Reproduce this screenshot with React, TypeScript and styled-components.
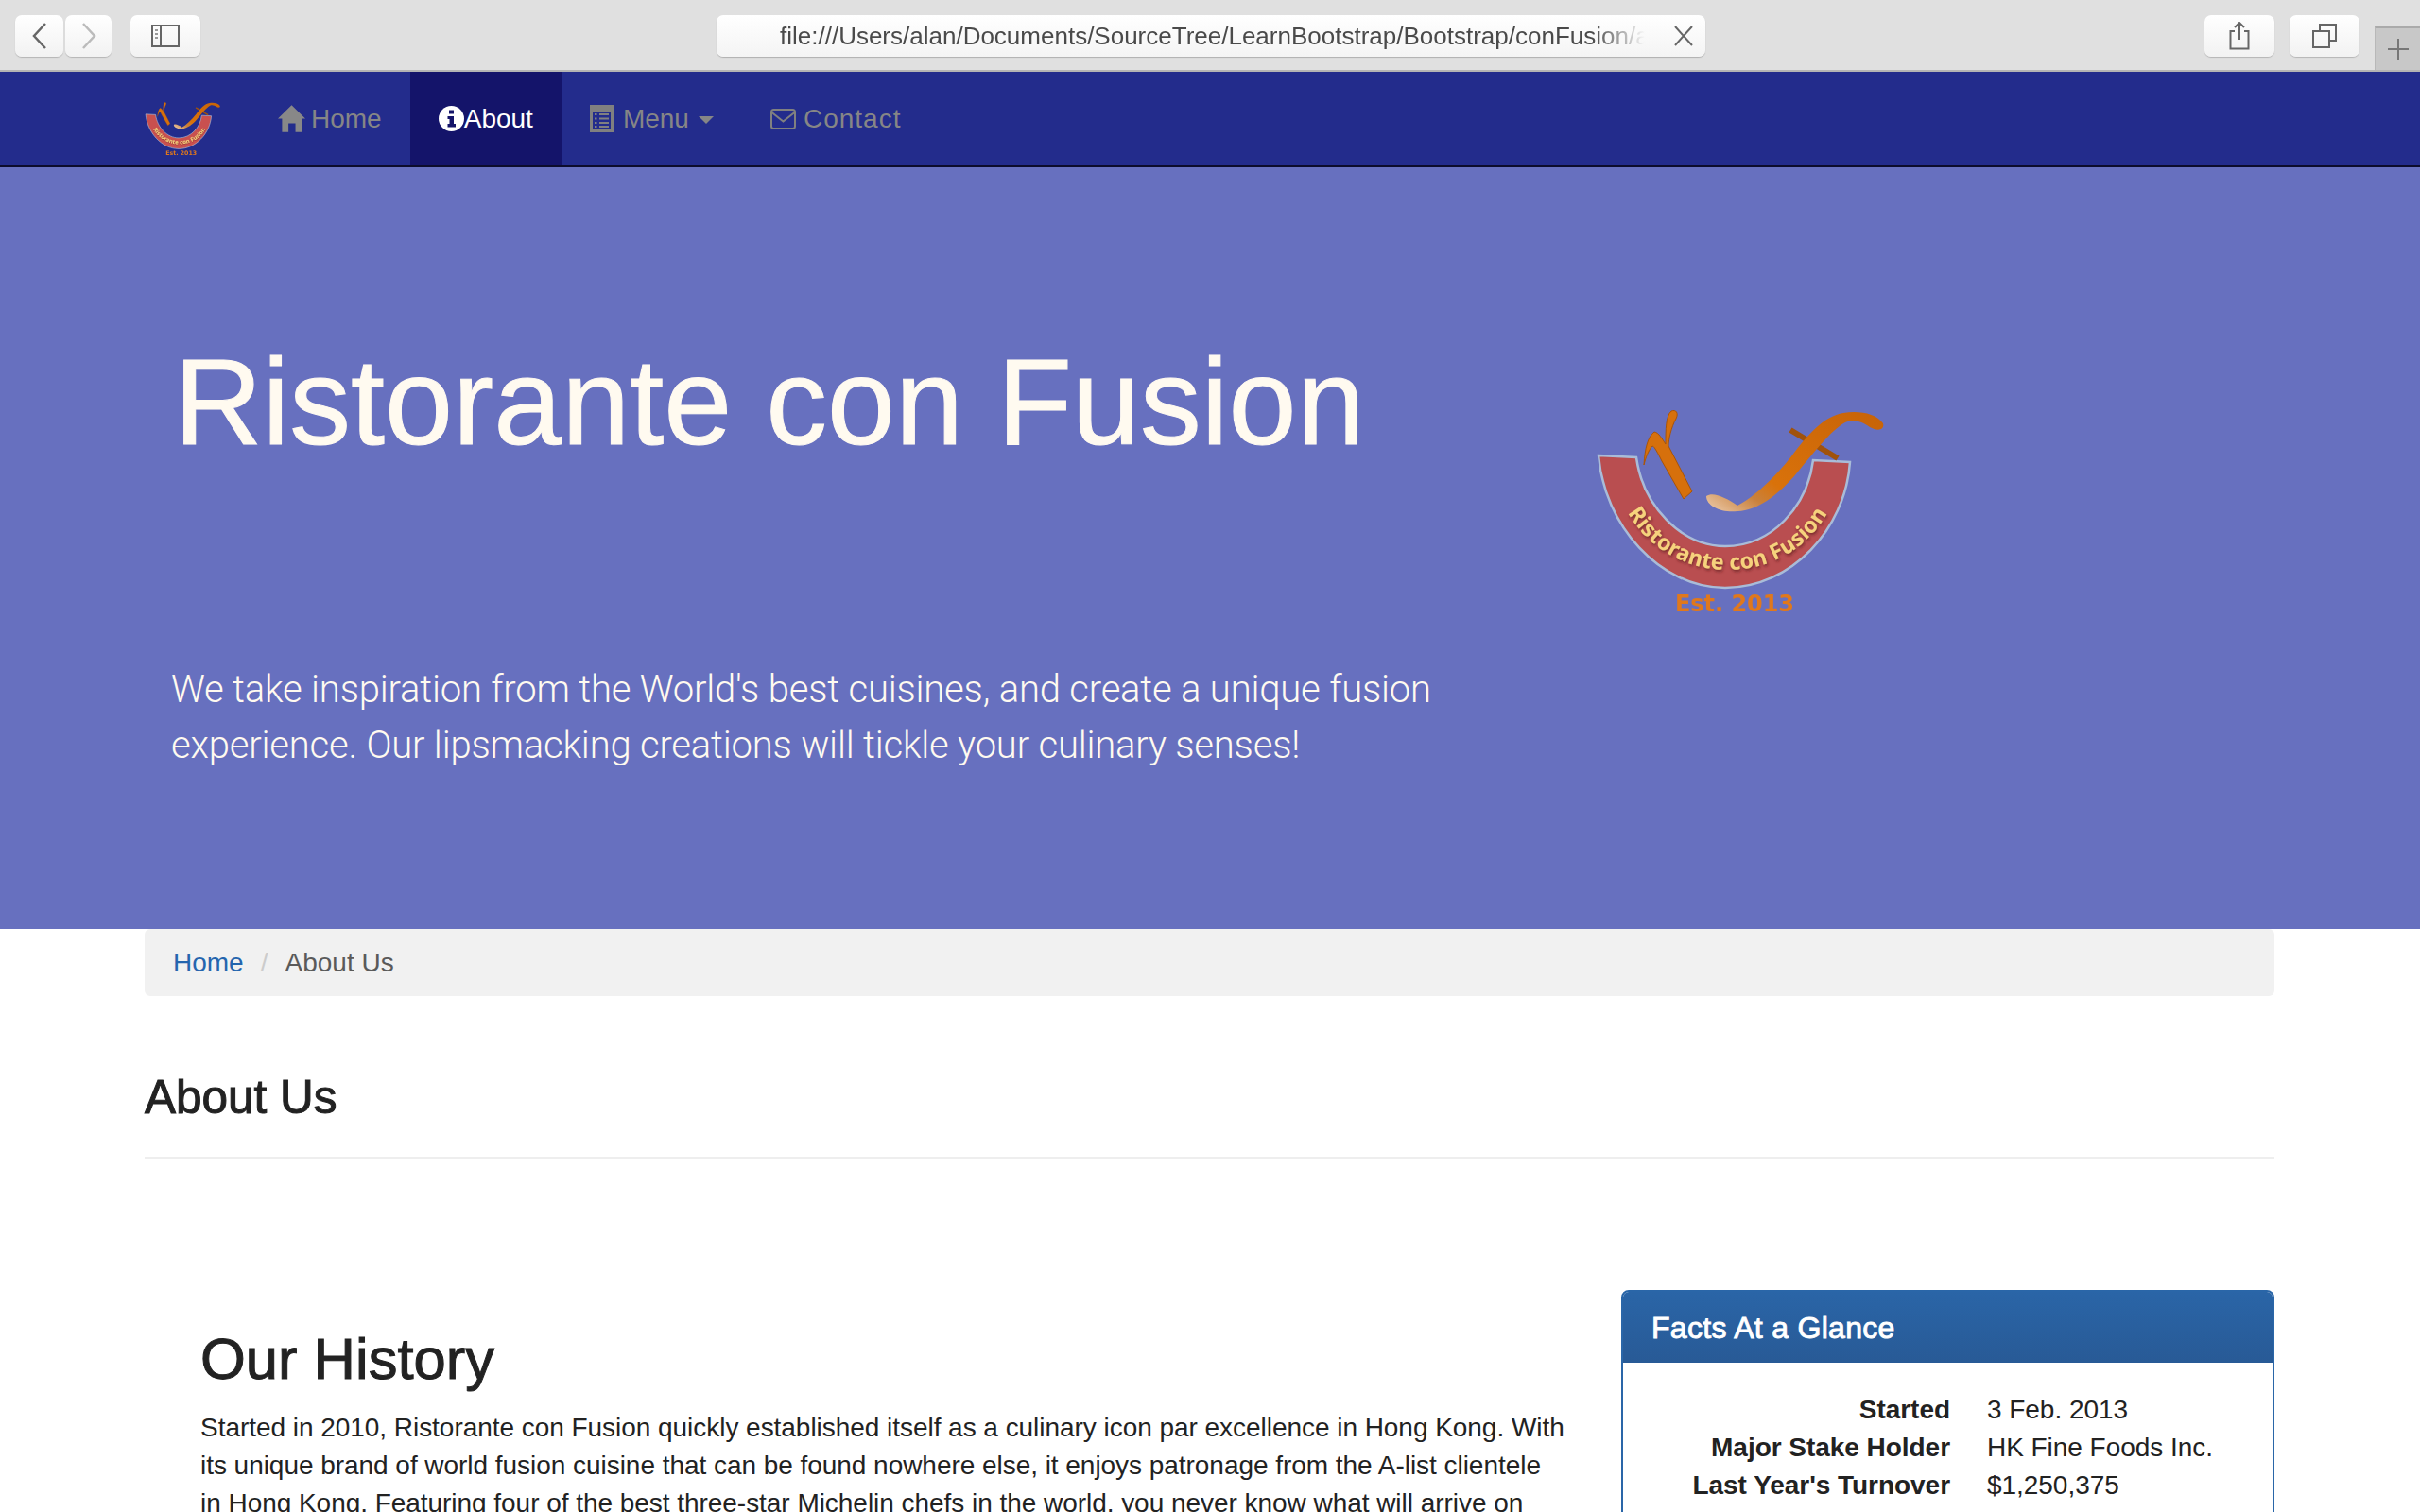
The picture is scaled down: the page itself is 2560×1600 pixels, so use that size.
import styled, { createGlobalStyle } from "styled-components";

const GlobalStyle = createGlobalStyle`
  html, body {
    margin: 0;
    padding: 0;
    background: #fff;
  }
  body {
    font-family: "Liberation Sans", Arial, sans-serif;
    font-size: 28px;
    line-height: 40px;
    letter-spacing: -0.04px;
    color: #222;
  }
  * {
    box-sizing: border-box;
  }
`;

function Logo({ small }: { small?: boolean }) {
  const key = small ? "S" : "L";
  return (
    <LogoSvg $small={small} viewBox="0 0 360 260">
      <defs>
        <linearGradient id={`spoon${key}`} x1="0" y1="0.9" x2="1" y2="0.1">
          <stop offset="0" stopColor="#e6bd96" />
          <stop offset="0.18" stopColor="#c9813c" />
          <stop offset="0.32" stopColor="#d9720a" />
          <stop offset="1" stopColor="#c86408" />
        </linearGradient>
        <path id={`arc${key}`} d="M62 133 C84 170 122 193 168 193 C214 193 252 170 273 133" />
        <filter id={`shadow${key}`} x="-10%" y="-20%" width="120%" height="140%">
          <feDropShadow dx="1" dy="2" stdDeviation="1.5" floodColor="#5a1c1c" floodOpacity="0.7" />
        </filter>
      </defs>
      <path
        d="M31 72 L71 74 C78 125 118 168 165 168 C215 168 252 125 258 77 L297 79 C292 150 235 212 165 212 C95 212 37 145 31 72 Z"
        fill={small ? "#c9504f" : "#b94e50"}
        stroke="#a9bcd8"
        strokeWidth="2.5"
      />
      <path
        d="M79 82 C80 65 83 52 90 47 C95 48 98 54 102 60 C102 45 102 30 108 25 C113 23 116 27 113 33 C108 42 105 55 105 62 L130 110 L121 118 L98 78 C94 70 90 62 88 62 C84 66 81 74 79 82 Z"
        fill="#d6700c"
        stroke="#a85408"
        strokeWidth="1"
      />
      <path d="M234 45 L284 75" stroke="#a0520c" strokeWidth="6" fill="none" />
      <path
        d="M145 115 C152 110 165 116 178 125 C195 116 215 98 235 73 C252 50 270 30 290 27 C305 24 325 27 332 38 C334 46 325 46 318 42 C310 36 300 33 292 37 C276 46 258 70 238 94 C220 114 200 130 178 131 C162 133 145 126 145 115 Z"
        fill={`url(#spoon${key})`}
      />
      <text fontFamily="'Noto Sans', sans-serif" fontSize="23" fontWeight="700" letterSpacing="0.3" fill="#f6d27c" filter={`url(#shadow${key})`}>
        <textPath href={`#arc${key}`} startOffset="50%" textAnchor="middle">
          Ristorante con Fusion
        </textPath>
      </text>
      <text x="175" y="237" textAnchor="middle" fontFamily="'DejaVu Sans', sans-serif" fontSize="24" fontWeight="700" fill="#e0781c">
        Est. 2013
      </text>
    </LogoSvg>
  );
}

function App() {
  return (
    <>
      <GlobalStyle />
      <Page>
        <Toolbar>
          <NavPair>
            <ToolButton $width={51}>
              <svg width="16" height="30" viewBox="0 0 16 30">
                <path d="M14 2 L2 15 L14 28" fill="none" stroke="#666" strokeWidth="2.5" />
              </svg>
            </ToolButton>
            <ToolButton $width={49}>
              <svg width="16" height="30" viewBox="0 0 16 30">
                <path d="M2 2 L14 15 L2 28" fill="none" stroke="#bbb" strokeWidth="2.5" />
              </svg>
            </ToolButton>
          </NavPair>
          <ToolButton $width={74}>
            <svg width="30" height="24" viewBox="0 0 30 24">
              <rect x="1" y="1" width="28" height="22" fill="none" stroke="#666" strokeWidth="2" />
              <path d="M10 1 V23" stroke="#666" strokeWidth="2" />
              <path d="M4 6 H7 M4 10 H7 M4 14 H7" stroke="#999" strokeWidth="2" />
            </svg>
          </ToolButton>
          <AddressBar>
            <AddressText>file:///Users/alan/Documents/SourceTree/LearnBootstrap/Bootstrap/conFusion/about.html</AddressText>
            <svg width="22" height="22" viewBox="0 0 22 22">
              <path d="M2 1 L20 21 M20 1 L2 21" stroke="#666" strokeWidth="2" />
            </svg>
          </AddressBar>
          <RightTools>
            <ToolButton $width={74}>
              <svg width="22" height="30" viewBox="0 0 22 30">
                <path d="M6 10 H1.5 V28.5 H20.5 V10 H16" fill="none" stroke="#666" strokeWidth="2" />
                <path d="M11 1 V19 M6 6 L11 1 L16 6" fill="none" stroke="#666" strokeWidth="2" />
              </svg>
            </ToolButton>
            <ToolButton $width={74}>
              <svg width="26" height="26" viewBox="0 0 26 26">
                <rect x="1" y="8" width="17" height="17" fill="none" stroke="#666" strokeWidth="2" />
                <path d="M8 8 V1 H25 V18 H18" fill="none" stroke="#666" strokeWidth="2" />
              </svg>
            </ToolButton>
          </RightTools>
          <NewTab>
            <svg width="24" height="24" viewBox="0 0 24 24">
              <path d="M12 1 V23 M1 12 H23" stroke="#777" strokeWidth="2" />
            </svg>
          </NewTab>
        </Toolbar>

        <Navbar>
          <Brand>
            <Logo small />
          </Brand>
          <NavItem $gap={6}>
            <svg width="29" height="29" viewBox="0 0 86 84">
              <path d="M43 0 L86 42 L75 42 L75 84 L55 84 L55 57 L33 57 L33 84 L13 84 L13 42 L0 42 Z" fill="#888" />
            </svg>
            Home
          </NavItem>
          <NavItem $active $gap={0}>
            <svg width="27" height="27" viewBox="0 0 27 27">
              <circle cx="13.5" cy="13.5" r="13.5" fill="#fff" />
              <path d="M11 4.5 H16 V8.5 H11 Z M9.5 11 H16 V19 H18 V22.5 H9.5 V19 H11.5 V14 H9.5 Z" fill="#14146a" />
            </svg>
            About
          </NavItem>
          <NavItem $gap={10}>
            <svg width="25" height="29" viewBox="0 0 25 29">
              <path d="M0 0 H25 V29 H0 Z M3 7 V26 H22 V7 Z" fill="#808080" fillRule="evenodd" />
              <path d="M5 10 H7.5 M10 10 H20 M5 14.5 H7.5 M10 14.5 H20 M5 19 H7.5 M10 19 H20 M5 23 H7.5 M10 23 H20" stroke="#808080" strokeWidth="2" />
            </svg>
            Menu
            <Caret />
          </NavItem>
          <NavItem $spaced $gap={8}>
            <svg width="27" height="22" viewBox="0 0 27 22">
              <rect x="1" y="1" width="25" height="20" rx="2.5" fill="none" stroke="#808080" strokeWidth="2" />
              <path d="M1.5 4 L13.5 13.5 L25.5 4" fill="none" stroke="#808080" strokeWidth="2" />
            </svg>
            Contact
          </NavItem>
        </Navbar>

        <Jumbotron>
          <JumboText>
            <JumboTitle>Ristorante con Fusion</JumboTitle>
            <JumboLead>
              We take inspiration from the World's best cuisines, and create a unique fusion experience. Our lipsmacking
              creations will tickle your culinary senses!
            </JumboLead>
          </JumboText>
          <JumboLogo>
            <Logo />
          </JumboLogo>
        </Jumbotron>

        <Container>
          <Breadcrumb>
            <BreadLink>Home</BreadLink>
            <BreadSep>/</BreadSep>
            <BreadCurrent>About Us</BreadCurrent>
          </Breadcrumb>
          <PageTitle>About Us</PageTitle>
          <Rule />
          <Columns>
            <History>
              <HistoryTitle>Our History</HistoryTitle>
              <HistoryText>
                Started in 2010, Ristorante con Fusion quickly established itself as a culinary icon par excellence in
                Hong Kong. With its unique brand of world fusion cuisine that can be found nowhere else, it enjoys
                patronage from the A-list clientele in Hong Kong. Featuring four of the best three-star Michelin chefs
                in the world, you never know what will arrive on your plate the next time you visit us.
              </HistoryText>
            </History>
            <Panel>
              <PanelHeading>Facts At a Glance</PanelHeading>
              <Facts>
                <FactLabel>Started</FactLabel>
                <FactValue>3 Feb. 2013</FactValue>
                <FactLabel>Major Stake Holder</FactLabel>
                <FactValue>HK Fine Foods Inc.</FactValue>
                <FactLabel>Last Year's Turnover</FactLabel>
                <FactValue>$1,250,375</FactValue>
                <FactLabel>Employees</FactLabel>
                <FactValue>40</FactValue>
              </Facts>
            </Panel>
          </Columns>
        </Container>
      </Page>
    </>
  );
}

export default App;

const Page = styled.div`
  width: 2560px;
  height: 1600px;
  overflow: hidden;
`;

const Toolbar = styled.header`
  height: 76px;
  display: flex;
  align-items: flex-start;
  padding: 16px 0 0 16px;
  background-color: #e0e0e0;
  border-bottom: 2px solid #b4b4b4;
`;

const NavPair = styled.div`
  display: flex;
  gap: 2px;
  margin-right: 20px;
`;

const ToolButton = styled.div<{ $width: number }>`
  width: ${(p) => p.$width}px;
  height: 44px;
  display: flex;
  align-items: center;
  justify-content: center;
  background: linear-gradient(#ffffff, #f2f2f2);
  border-radius: 7px;
  box-shadow: 0 1px 1px #b5b5b5;
`;

const AddressBar = styled.div`
  width: 1046px;
  height: 44px;
  margin-left: 546px;
  padding: 0 12px 0 67px;
  display: flex;
  align-items: center;
  justify-content: space-between;
  background: linear-gradient(#ffffff, #f4f4f4);
  border-radius: 7px;
  box-shadow: 0 1px 1px #b0b0b0;
`;

const AddressText = styled.div`
  width: 915px;
  overflow: hidden;
  white-space: nowrap;
  font-size: 26px;
  line-height: 44px;
  letter-spacing: 0;
  color: #4a4a4a;
  -webkit-mask-image: linear-gradient(to right, #000 94%, transparent 100%);
  mask-image: linear-gradient(to right, #000 94%, transparent 100%);
`;

const RightTools = styled.div`
  display: flex;
  gap: 16px;
  margin-left: 528px;
`;

const NewTab = styled.div`
  width: 48px;
  height: 46px;
  margin: 12px 0 0 16px;
  display: flex;
  align-items: center;
  justify-content: center;
  background-color: #c8c8c8;
  border-top: 2px solid #aaa;
  border-left: 1px solid #b8b8b8;
`;

const Navbar = styled.nav`
  height: 101px;
  display: flex;
  align-items: stretch;
  padding-left: 146px;
  background-color: #232c8c;
  border-bottom: 2px solid #0c0c2c;
`;

const Brand = styled.div`
  width: 118px;
  padding-top: 26px;
`;

const LogoSvg = styled.svg<{ $small?: boolean }>`
  display: block;
  width: ${(p) => (p.$small ? 94 : 360)}px;
  height: ${(p) => (p.$small ? 68 : 260)}px;
  filter: blur(${(p) => (p.$small ? 0.4 : 0.7)}px);
`;

const NavItem = styled.div<{ $active?: boolean; $spaced?: boolean; $gap: number }>`
  display: flex;
  align-items: center;
  gap: ${(p) => p.$gap}px;
  padding: 0 30px;
  font-size: 28px;
  letter-spacing: ${(p) => (p.$spaced ? 1 : 0)}px;
  color: ${(p) => (p.$active ? "#fff" : "#868686")};
  background-color: ${(p) => (p.$active ? "#14146a" : "transparent")};
`;

const Caret = styled.span`
  width: 0;
  height: 0;
  margin: 2px 0 0 0;
  border-top: 8px solid #868686;
  border-left: 8px solid transparent;
  border-right: 8px solid transparent;
`;

const Jumbotron = styled.section`
  height: 806px;
  display: flex;
  padding-left: 181px;
  background-color: #6770bf;
`;

const JumboText = styled.div`
  width: 1479px;
  color: #fffaf0;
`;

const JumboTitle = styled.h1`
  margin: 0;
  padding: 177px 0 0 3px;
  font-size: 129.5px;
  line-height: 142px;
  font-weight: 400;
  letter-spacing: 0;
  -webkit-text-stroke: 1px #fffaf0;
`;

const JumboLead = styled.p`
  width: 1380px;
  margin: 204px 0 0;
  font-family: "Roboto", "Liberation Sans", sans-serif;
  font-size: 40px;
  line-height: 59px;
  font-weight: 300;
  letter-spacing: -0.2px;
`;

const JumboLogo = styled.div`
  padding-top: 233px;
`;

const Container = styled.main`
  padding: 0 154px 0 153px;
`;

const Breadcrumb = styled.div`
  height: 71px;
  display: flex;
  align-items: center;
  padding-left: 30px;
  letter-spacing: 0;
  background-color: #f1f1f1;
  border-radius: 6px;
`;

const BreadLink = styled.span`
  color: #2565ae;
`;

const BreadSep = styled.span`
  padding: 0 18px;
  color: #ccc;
`;

const BreadCurrent = styled.span`
  color: #5a5a5a;
`;

const PageTitle = styled.h2`
  margin: 77px 0 0;
  font-size: 49.5px;
  line-height: 60px;
  font-weight: 400;
  letter-spacing: 0;
  color: #222;
  -webkit-text-stroke: 1px #222;
`;

const Rule = styled.div`
  height: 2px;
  margin-top: 33px;
  background-color: #eee;
`;

const Columns = styled.div`
  display: flex;
  justify-content: space-between;
  margin-top: 139px;
`;

const History = styled.article`
  width: 1504px;
  padding: 40px 0 0 59px;
`;

const HistoryTitle = styled.h2`
  margin: 0 0 20px;
  font-size: 61.5px;
  line-height: 66px;
  font-weight: 400;
  letter-spacing: 0;
  -webkit-text-stroke: 1px #222;
`;

const HistoryText = styled.p`
  margin: 0;
`;

const Panel = styled.aside`
  width: 691px;
  border: 2px solid #2a66a8;
  border-radius: 8px 8px 0 0;
`;

const PanelHeading = styled.h3`
  height: 75px;
  margin: 0;
  padding-left: 30px;
  display: flex;
  align-items: center;
  font-size: 32px;
  font-weight: 400;
  letter-spacing: 0.3px;
  color: #fff;
  -webkit-text-stroke: 0.9px #fff;
  background: linear-gradient(#2a65a7, #285a96);
  border-radius: 6px 6px 0 0;
`;

const Facts = styled.dl`
  display: grid;
  grid-template-columns: 346px 1fr;
  column-gap: 39px;
  margin: 30px 0 0;
`;

const FactLabel = styled.dt`
  text-align: right;
  font-weight: 700;
`;

const FactValue = styled.dd`
  margin: 0;
`;
